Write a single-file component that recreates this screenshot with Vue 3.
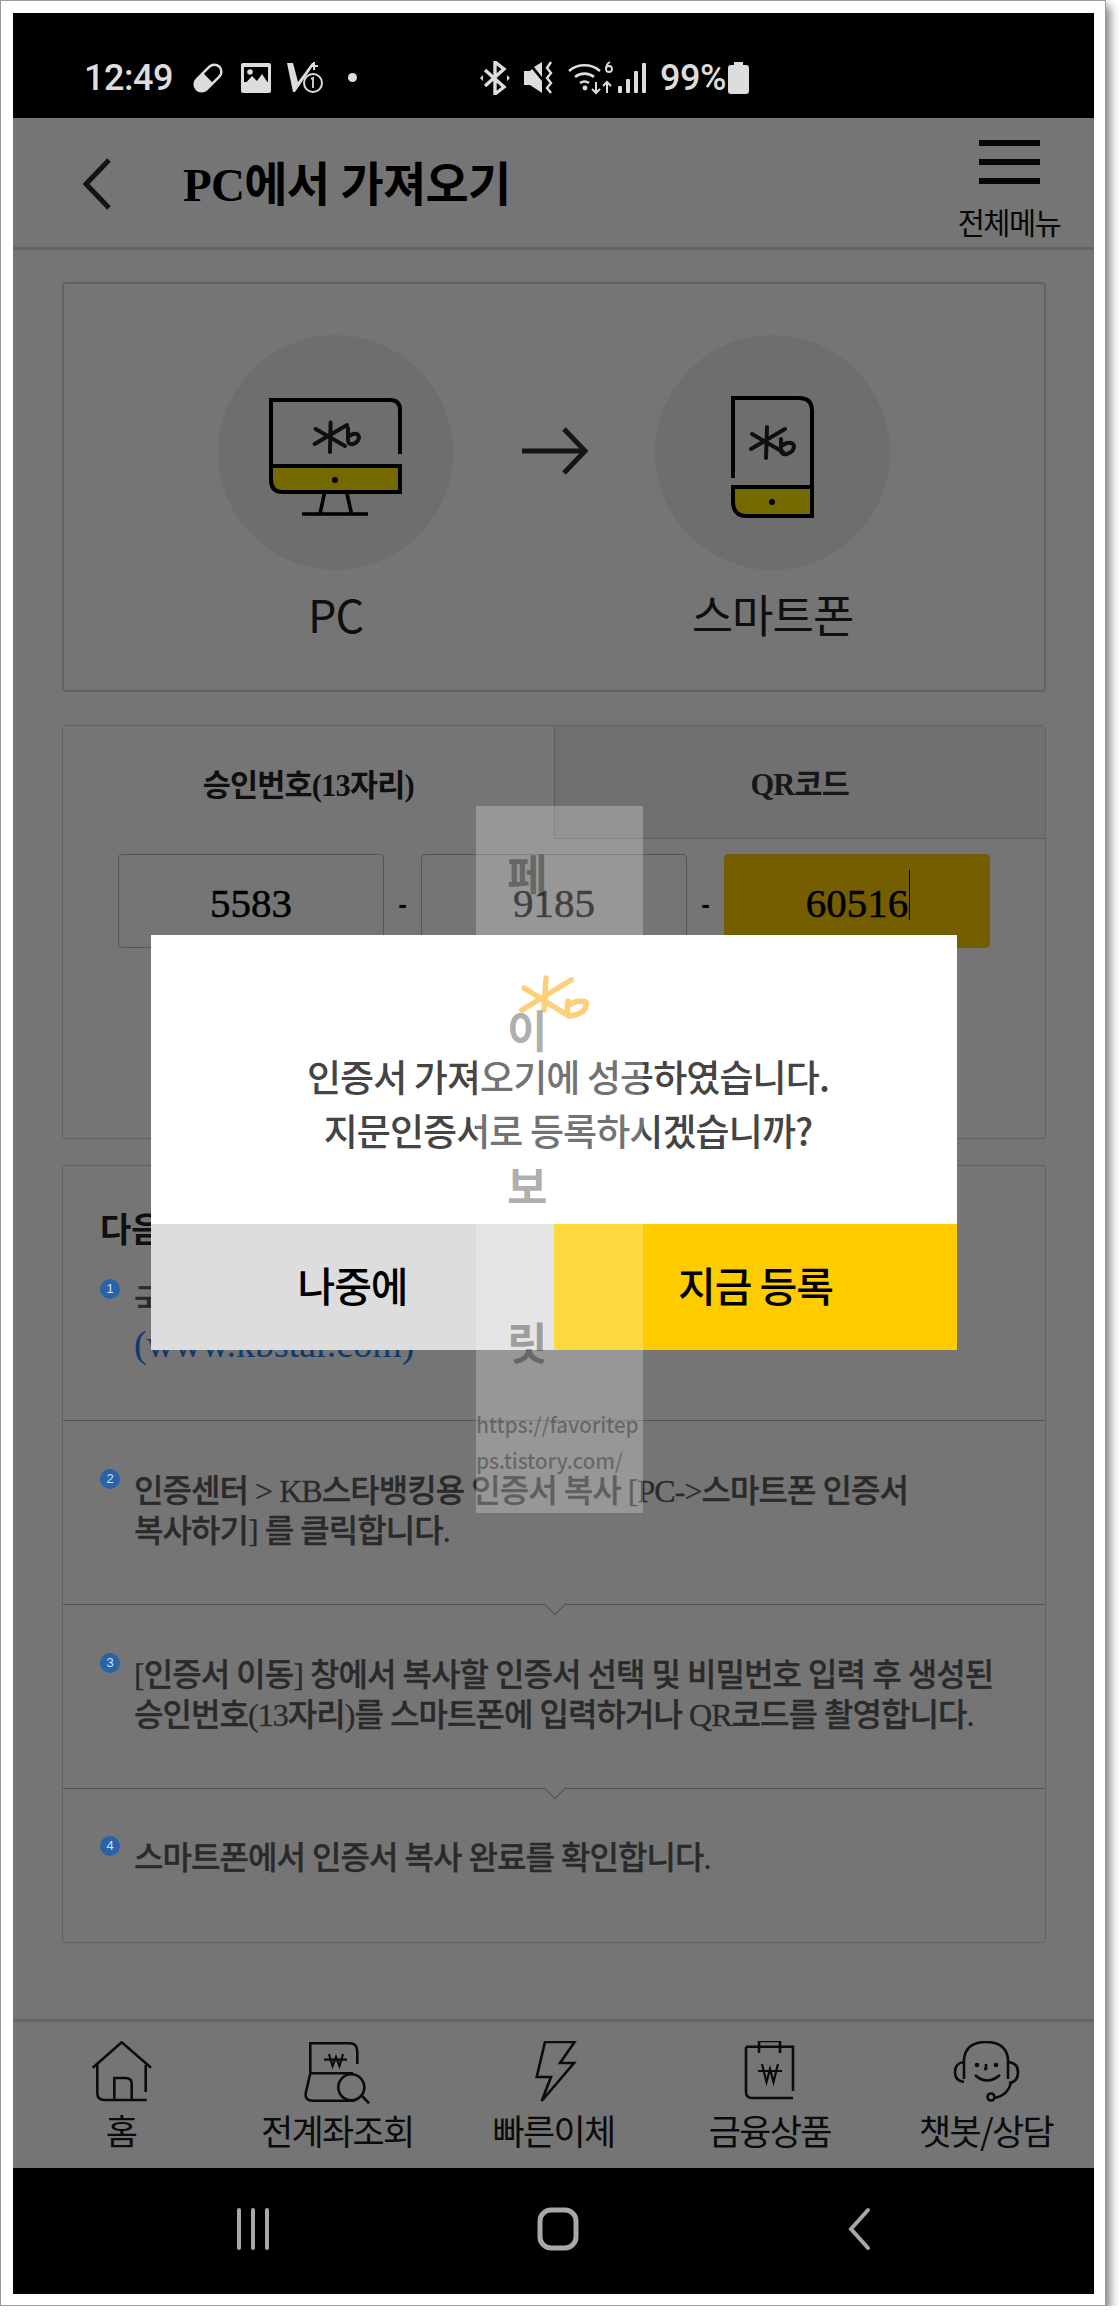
<template>
  <div class="frame">
    <div class="screen">
      <div class="status">
        <span class="time">12:49</span>
        <svg class="st" width="32" height="32" viewBox="0 0 32 32" style="margin-left:16px"><g transform="rotate(45 16 16)"><rect x="9" y="0" width="14" height="32" rx="7" fill="none" stroke="#ddd" stroke-width="2.5"/><path d="M9 16h14v9a7 7 0 0 1-14 0z" fill="#ddd"/></g></svg>
        <svg class="st" width="32" height="30" viewBox="0 0 32 30" style="margin-left:16px"><rect x="1" y="0" width="30" height="30" rx="2" fill="#ddd"/><rect x="4" y="4" width="24" height="15" fill="#000"/><circle cx="10" cy="9" r="2.8" fill="#ddd"/><path d="M4 22l8-9 5 5 5-7 6 9v4H4z" fill="#ddd"/></svg>
        <svg class="st" width="38" height="32" viewBox="0 0 38 32" style="margin-left:14px"><path d="M1 1h6l5 19L26 1h3L9 30H7z" fill="#ddd"/><path d="M28 0v8M24 4h8" stroke="#ddd" stroke-width="2"/><circle cx="27" cy="21" r="9" fill="#000" stroke="#ddd" stroke-width="2"/><path d="M25 17l2-1v10" fill="none" stroke="#ddd" stroke-width="1.8"/></svg>
        <i class="dot"></i>
        <svg class="st" width="30" height="34" viewBox="0 0 30 34" style="margin-left:123px"><path d="M5 9l19 17-9 7V1l9 7L5 25" fill="none" stroke="#ddd" stroke-width="3.4"/><path d="M0 17l3-3v6zM30 17l-3-3v6z" fill="#ddd"/></svg>
        <svg class="st" width="32" height="34" viewBox="0 0 32 34" style="margin-left:13px"><path d="M1 10h6l2-2 10 12v12L7 24H1zM11 6l8-5v15z" fill="#ddd"/><path d="M28 1l-4 6 4 5-4 5 4 5-4 5 4 5" fill="none" stroke="#ddd" stroke-width="2.4"/></svg>
        <svg class="st" width="46" height="34" viewBox="0 0 46 34" style="margin-left:13px"><g fill="none" stroke="#ddd" stroke-width="2.6"><path d="M1 10a24 24 0 0 1 31 0"/><path d="M7 16a15 15 0 0 1 19 0"/><path d="M12 22a8 8 0 0 1 9 0"/></g><circle cx="17" cy="27" r="2.4" fill="#ddd"/><path d="M28 21v11M24 28l4 4 4-4M39 32V21M35 25l4-4 4 4" fill="none" stroke="#ddd" stroke-width="2"/><circle cx="41" cy="8" r="3" fill="none" stroke="#ddd" stroke-width="1.8"/><path d="M42 1q-4 2-4 7" fill="none" stroke="#ddd" stroke-width="1.8"/></svg>
        <svg class="st" width="28" height="30" viewBox="0 0 28 30" style="margin-left:4px"><rect x="0" y="23" width="4" height="7" rx="1" fill="#ddd"/><rect x="8" y="16" width="4" height="14" rx="1" fill="#ddd"/><rect x="16" y="8" width="4" height="22" rx="1" fill="#ddd"/><rect x="24" y="0" width="4" height="30" rx="1" fill="#ddd"/></svg>
        <span class="pct">99%</span>
        <svg class="st" width="21" height="32" viewBox="0 0 21 32" style="margin-left:2px"><path d="M6 0h9v3h3a3 3 0 0 1 3 3v23a3 3 0 0 1-3 3H3a3 3 0 0 1-3-3V6a3 3 0 0 1 3-3h3z" fill="#ddd"/></svg>
      </div>

      <div class="body">
        <header class="head">
          <svg class="back" width="32" height="52" viewBox="0 0 32 52"><path d="M28 2L5 26l23 24" fill="none" stroke="#2a2a2a" stroke-width="5"/></svg>
          <h1>PC에서 가져오기</h1>
          <div class="menu">
            <div class="bars"><i></i><i></i><i></i></div>
            <span>전체메뉴</span>
          </div>
        </header>

        <main class="content">
          <section class="card flow">
            <div class="side">
              <div class="circle">
                <svg width="134" height="118" viewBox="0 0 134 118">
                  <path d="M2 68V2h119q10 0 10 10v44" fill="none" stroke="#000" stroke-width="4"/>
                  <path d="M2 68h129v26H14Q2 94 2 82z" fill="#ffe600" stroke="#000" stroke-width="4"/>
                  <circle cx="66" cy="82" r="3" fill="#000"/>
                  <path d="M55.6 94L51 116M77.6 94l5 22M33 116h66" fill="none" stroke="#000" stroke-width="3.6"/>
                  <g fill="none" stroke="#222" stroke-width="4" stroke-linecap="round"><path d="M61.6 24.6L61 54M46.6 31L76 48M45.6 46L78 27"/><path d="M79 30v12q0 5 5 4 6-2 6-7-1-4-6-3-3 1-5 3"/></g>
                </svg>
              </div>
              <span>PC</span>
            </div>
            <svg class="arrow" width="66" height="48" viewBox="0 0 66 48"><path d="M0 24h60M42 2l21 22-21 22" fill="none" stroke="#2e2e2e" stroke-width="5"/></svg>
            <div class="side">
              <div class="circle">
                <svg width="83" height="122" viewBox="0 0 83 122">
                  <path d="M2 82V2h66q13 0 13 13v75" fill="none" stroke="#000" stroke-width="4"/>
                  <path d="M2 91h79v29H16Q2 120 2 106z" fill="#ffe600" stroke="#000" stroke-width="4"/>
                  <circle cx="41" cy="106" r="3" fill="#000"/>
                  <g fill="none" stroke="#222" stroke-width="4" stroke-linecap="round"><path d="M36 31l-1 31M21 38l31 18M20 53l34-20"/><path d="M50 43v11q0 5 6 4 7-2 7-8-1-4-7-3-3 1-6 3"/></g>
                </svg>
              </div>
              <span>스마트폰</span>
            </div>
          </section>

          <section class="card code">
            <div class="tabs">
              <div class="tab on">승인번호(13자리)</div>
              <div class="tab">QR코드</div>
            </div>
            <div class="fields">
              <div class="field">5583</div>
              <b>-</b>
              <div class="field">9185</div>
              <b>-</b>
              <div class="field active"><span class="caret">60516</span></div>
            </div>
          </section>

          <section class="card steps">
            <div class="step first">
              <h2>다음 순서로 진행해 주세요.</h2>
              <div class="row">
                <i class="badge">1</i>
                <p>국민은행 홈페이지에 접속합니다.<br /><a>(www.kbstar.com)</a></p>
              </div>
            </div>
            <div class="step second">
              <div class="row">
                <i class="badge">2</i>
                <p>인증센터 &gt; KB스타뱅킹용 인증서 복사 [PC-&gt;스마트폰 인증서<br />복사하기] 를 클릭합니다.</p>
              </div>
            </div>
            <div class="step notch third">
              <div class="row">
                <i class="badge">3</i>
                <p>[인증서 이동] 창에서 복사할 인증서 선택 및 비밀번호 입력 후 생성된<br />승인번호(13자리)를 스마트폰에 입력하거나 QR코드를 촬영합니다.</p>
              </div>
            </div>
            <div class="step notch fourth">
              <div class="row">
                <i class="badge">4</i>
                <p>스마트폰에서 인증서 복사 완료를 확인합니다.</p>
              </div>
            </div>
          </section>
        </main>

        <nav class="tabbar">
          <div v-for="t in tabItems" :key="t.label" class="tabitem">
            <svg width="70" height="66" viewBox="0 0 70 66" fill="none" stroke="#1a1a1a" stroke-width="2.6" v-html="t.icon"></svg>
            <span>{{ t.label }}</span>
          </div>
        </nav>

        <div class="dim"></div>
      </div>

      <div class="navbar">
        <svg width="36" height="42" viewBox="0 0 36 42"><path d="M4 2v38M18 2v38M32 2v38" stroke="#a8a8a8" stroke-width="4" stroke-linecap="round"/></svg>
        <svg width="42" height="44" viewBox="0 0 42 44"><rect x="3" y="3" width="36" height="38" rx="11" fill="none" stroke="#a8a8a8" stroke-width="5"/></svg>
        <svg width="28" height="44" viewBox="0 0 28 44"><path d="M23 3L6 22l17 19" fill="none" stroke="#a8a8a8" stroke-width="4" stroke-linecap="round"/></svg>
      </div>

      <div class="dialog">
        <div class="msg">
          <svg class="logo" width="75" height="46" viewBox="0 0 75 46"><g fill="none" stroke="#fdbf4e" stroke-width="5.5" stroke-linecap="round" stroke-linejoin="round"><path d="M29 3l-2 32M7 13l45 28M5 35L54 5"/><path d="M51 26q-1 8 0 13M52 30q10-6 17-3 2 8-8 12-5 2-9 2"/></g></svg>
          <p>인증서 가져오기에 성공하였습니다.</p>
          <p>지문인증서로 등록하시겠습니까?</p>
        </div>
        <div class="btns">
          <button class="later">나중에</button>
          <button class="now">지금 등록</button>
        </div>
      </div>

      <div class="mark">
        <span class="ch">페</span>
        <span class="ch">이</span>
        <span class="ch">보</span>
        <span class="ch">릿</span>
        <span class="url">https://favoritep<br />ps.tistory.com/</span>
      </div>
    </div>
  </div>
</template>

<script setup>
const tabItems = [
  {
    label: '홈',
    icon: '<path d="M6.7 26.7L35.7 1.3 65 26.7"/><path d="M11.3 22v30q0 7 7 7h42.4M59.7 24v27"/><path d="M28.3 59V37h11q6.4 0 6.4 6v16"/>'
  },
  {
    label: '전계좌조회',
    icon: '<path d="M8.3 32.3V2.3h39.4q7.6 0 7.6 8.4V23M8.3 32.3H51M8.3 32.3l-4.6 20q-1 7.4 7.3 7.4h41.7"/><circle cx="49.3" cy="46.3" r="13"/><path d="M59.3 54l7.7 8.3"/><path d="M27 13l3.5 12 3.5-9 3.5 9 3.5-12M22 18.7h23" stroke-width="2.2"/>'
  },
  {
    label: '빠른이체',
    icon: '<path d="M26 1h29.6L41 22h14L22.7 60 32 36H17.7z"/>'
  },
  {
    label: '금융상품',
    icon: '<path d="M11 5.700h47V50M11 5.700V51q0 6 6 6h41"/><path d="M24 12V0h21v12"/><path d="M27 23l4.500 18 3.500-13 3.500 13 4.500-18M23 30h24" stroke-width="2.2"/>'
  },
  {
    label: '챗봇/상담',
    icon: '<path d="M13 38V18Q15 1 35 1t22 17v20"/><path d="M13 21q-9 1-9 10 0 9 9 10M57 21q10 1 10 10 0 10-9 11"/><circle cx="26" cy="24" r="1"/><circle cx="45" cy="24" r="1"/><path d="M35 23v5h-2M24 34q12 11 25 0"/><path d="M60 42q-3 12-16 15"/><circle cx="40" cy="56" r="3.500"/>'
  }
];
</script>

<style>
html, body {
  margin: 0;
  background: #fff;
}
</style>

<style scoped>
.frame {
  box-sizing: border-box;
  width: 1106px;
  height: 2306px;
  padding: 12px 11px 10px 12px;
  background: #fff;
  border: 1px solid #9a9a9a;
  box-shadow: 4px 6px 9px rgba(0, 0, 0, 0.5);
  font-family: "Liberation Serif", "Noto Sans CJK KR", serif;
}
.screen {
  position: relative;
  display: flex;
  flex-direction: column;
  width: 1081px;
  height: 2281px;
  background: #000;
}
.status {
  flex: 0 0 105px;
  display: flex;
  align-items: center;
  box-sizing: border-box;
  padding: 24px 0 0 71px;
  color: #ddd;
}
.st {
  flex: none;
}
.time, .pct {
  font: 500 36px/1 "Roboto", sans-serif;
  letter-spacing: -0.5px;
}
.time {
  width: 92px;
}
.pct {
  margin-left: 14px;
}
.dot {
  width: 9px;
  height: 9px;
  margin-left: 24px;
  border-radius: 50%;
  background: #ddd;
}
.body {
  position: relative;
  flex: 1;
  display: flex;
  flex-direction: column;
  background: #fff;
}
.dim {
  position: absolute;
  inset: 0;
  z-index: 1;
  background: rgba(0, 0, 0, 0.54);
}
.head {
  flex: 0 0 132px;
  display: flex;
  align-items: flex-start;
  box-sizing: border-box;
  border-bottom: 3px solid #ddd;
  position: relative;
}
.back {
  margin: 40px 0 0 68px;
}
h1 {
  margin: 42px 0 0 70px;
  font-size: 47px;
  line-height: 50px;
  font-weight: 700;
  letter-spacing: -0.7px;
  color: #000;
}
.menu {
  position: absolute;
  right: 28px;
  top: 22px;
  width: 114px;
  text-align: center;
  font: 400 29.5px/36px "Noto Sans CJK KR", sans-serif;
  letter-spacing: -1.5px;
  color: #111;
}
.bars {
  display: flex;
  flex-direction: column;
  gap: 13px;
  width: 61px;
  margin: 0 auto 19px;
}
.bars i {
  height: 6px;
  background: #111;
}
.content {
  flex: 1;
  padding: 32px 48px 0 49px;
}
.card {
  box-sizing: border-box;
  border: 2px solid #d4d4d4;
  border-radius: 4px;
}
.flow {
  position: relative;
  height: 410px;
}
.side {
  position: absolute;
  top: 51px;
  width: 235px;
  text-align: center;
  font: 400 45px/1 "Noto Sans CJK KR", sans-serif;
  letter-spacing: -1px;
  color: #222;
}
.side:first-child {
  left: 154px;
}
.side:last-child {
  left: 591px;
}
.circle {
  display: flex;
  align-items: center;
  justify-content: center;
  width: 235px;
  height: 235px;
  margin-bottom: 21px;
  border-radius: 50%;
  background: #efefef;
}
.circle svg {
  margin-top: 9px;
}
.arrow {
  position: absolute;
  left: 458px;
  top: 143px;
}
.code {
  height: 414px;
  margin-top: 33px;
  border-width: 1px;
}
.tabs {
  display: flex;
  height: 113px;
}
.tab {
  flex: 1;
  display: flex;
  align-items: center;
  justify-content: center;
  font-size: 30.5px;
  font-weight: 700;
  letter-spacing: -0.8px;
  color: #333;
  background: #f4f4f4;
  border-left: 1px solid #ccc;
  border-bottom: 1px solid #ccc;
}
.tab.on {
  background: #fff;
  color: #222;
  border-left: 0;
  border-bottom: 0;
}
.fields {
  display: flex;
  align-items: center;
  justify-content: center;
  margin-top: 15px;
}
.fields b {
  width: 37px;
  text-align: center;
  font: 700 26px/1 "Liberation Sans", sans-serif;
  color: #111;
  padding-top: 6px;
}
.field {
  box-sizing: border-box;
  width: 266px;
  height: 94px;
  display: flex;
  align-items: center;
  justify-content: center;
  border: 1px solid #bbb;
  border-radius: 4px;
  font-size: 41px;
  -webkit-text-stroke: 0.5px #000;
  color: #000;
  padding-top: 4px;
}
.field.active {
  background: #ffcc00;
  border-color: #ffcc00;
}
.caret {
  position: relative;
}
.caret::after {
  content: "";
  position: absolute;
  right: -2px;
  top: -9px;
  width: 1px;
  height: 50px;
  background: #000;
}
.steps {
  height: 778px;
  margin-top: 26px;
  border-width: 1px;
}
.step {
  position: relative;
  box-sizing: border-box;
  padding: 0 20px 0 37px;
  border-bottom: 1px solid #b8b8b8;
}
.step:last-child {
  border-bottom: 0;
}
.first {
  height: 255px;
  padding-top: 45px;
}
.second {
  height: 184px;
  padding-top: 50px;
}
.third {
  height: 184px;
  padding-top: 50px;
}
.fourth {
  height: 153px;
  padding-top: 49px;
}
.notch::before {
  content: "";
  position: absolute;
  left: 484px;
  top: -9px;
  width: 15px;
  height: 15px;
  background: #fff;
  border-right: 1px solid #b8b8b8;
  border-bottom: 1px solid #b8b8b8;
  transform: rotate(45deg);
}
h2 {
  margin: 0 0 30px;
  font-size: 34px;
  line-height: 40px;
  font-weight: 700;
  color: #222;
}
.row {
  position: relative;
  padding-left: 34px;
}
.badge {
  position: absolute;
  z-index: 2;
  left: 0;
  top: -2px;
  width: 20px;
  height: 20px;
  border-radius: 50%;
  background: #2a62a8;
  color: #cfe0f4;
  font: 400 13px/20px "Liberation Sans", sans-serif;
  text-align: center;
}
.row p {
  margin: 0;
  font-size: 32px;
  line-height: 40px;
  font-weight: 500;
  letter-spacing: -0.95px;
  white-space: nowrap;
  color: #5c5c5c;
  -webkit-text-stroke: 0.3px #5c5c5c;
}
.row a {
  display: inline-block;
  color: #2080f0;
  -webkit-text-stroke: 0;
  font-size: 38px;
  line-height: 46px;
  letter-spacing: 0;
}
.tabbar {
  flex: 0 0 149px;
  display: flex;
  box-sizing: border-box;
  border-top: 3px solid #ddd;
}
.tabitem {
  flex: 1;
  display: flex;
  flex-direction: column;
  align-items: center;
  padding-top: 19px;
  font: 400 35px/40px "Noto Sans CJK KR", sans-serif;
  letter-spacing: -1.7px;
  color: #1a1a1a;
}
.tabitem svg {
  margin-bottom: 3px;
}
.navbar {
  flex: 0 0 126px;
  display: flex;
  align-items: center;
  justify-content: center;
  gap: 266px;
  box-sizing: border-box;
  padding: 0 0 4px;
}
.dialog {
  position: absolute;
  z-index: 3;
  left: 138px;
  top: 922px;
  width: 806px;
  height: 415px;
  display: flex;
  flex-direction: column;
  background: #fff;
  font-family: "Noto Sans CJK KR", sans-serif;
}
.msg {
  height: 289px;
  text-align: center;
  box-sizing: border-box;
  padding-top: 40px;
}
.logo {
  display: block;
  margin: 0 auto 28px;
}
.msg p {
  margin: 0;
  padding-left: 28px;
  font-size: 37px;
  line-height: 54px;
  font-weight: 500;
  letter-spacing: -0.9px;
  color: #444;
}
.btns {
  display: flex;
  height: 126px;
}
.btns button {
  flex: 1;
  border: 0;
  padding: 0 0 6px;
  font: 500 41px/1 "Noto Sans CJK KR", sans-serif;
  letter-spacing: -1px;
  color: #000;
}
.later {
  background: #ddd;
}
.now {
  background: #ffcc00;
}
.mark {
  position: absolute;
  z-index: 4;
  left: 463px;
  top: 793px;
  width: 167px;
  height: 707px;
  background: rgba(255, 255, 255, 0.25);
  font-family: "Noto Sans CJK KR", sans-serif;
  color: rgba(0, 0, 0, 0.32);
  pointer-events: none;
}
.ch {
  display: block;
  height: 156px;
  padding-left: 31px;
  font-size: 44px;
  font-weight: 700;
  line-height: 156px;
}
.ch:first-child {
  margin-top: -11px;
}
.url {
  display: block;
  margin-top: -13px;
  font-size: 21px;
  line-height: 36px;
  font-weight: 500;
  white-space: nowrap;
  letter-spacing: -0.2px;
}
</style>
